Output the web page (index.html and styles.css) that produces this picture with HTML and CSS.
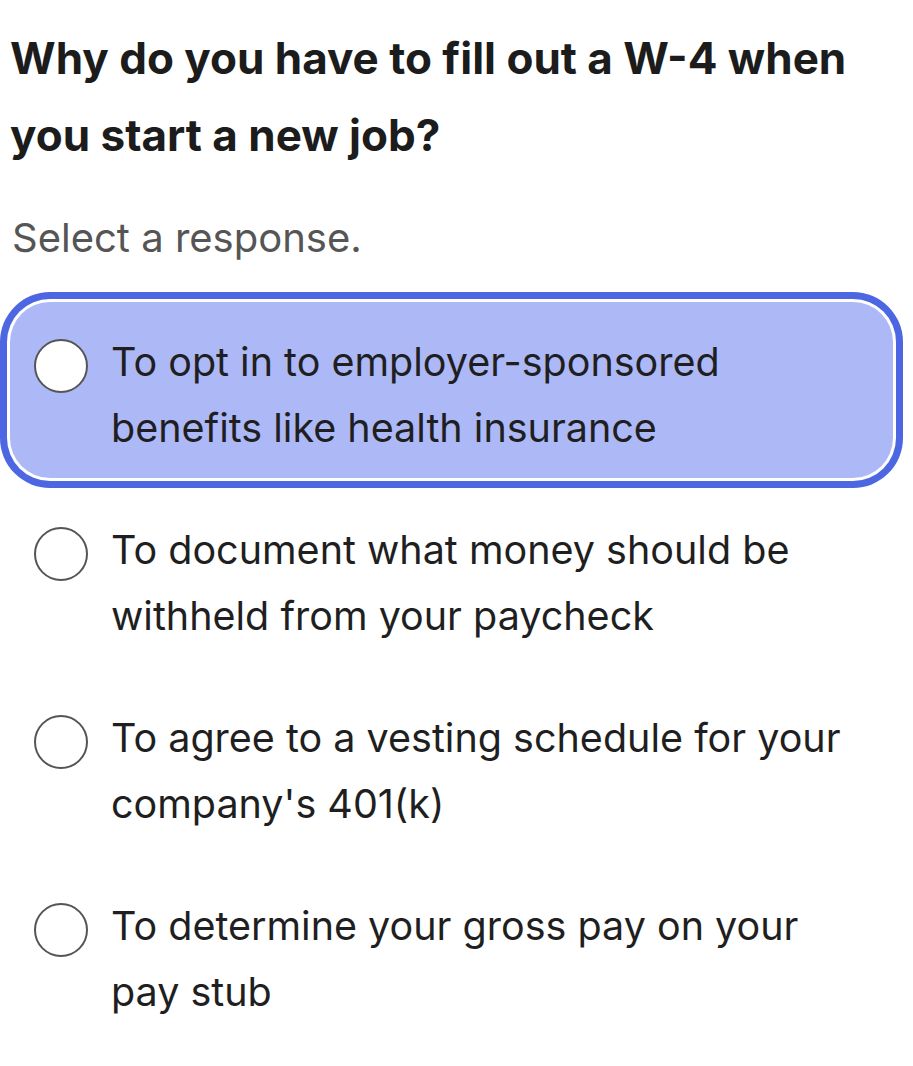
FILE: index.html
```html
<!DOCTYPE html>
<html lang="en">
<head>
<meta charset="utf-8">
<title>W-4 question</title>
<link rel="stylesheet" href="styles.css">
</head>
<body>
<main class="quiz">
  <h1 class="question">Why do you have to fill out a W-4 when you start a new job?</h1>
  <p class="prompt">Select a response.</p>
  <ul class="options">
    <li class="option is-selected">
      <span class="radio"></span>
      <span class="label">To opt in to employer-sponsored benefits like health insurance</span>
    </li>
    <li class="option">
      <span class="radio"></span>
      <span class="label">To document what money should be withheld from your paycheck</span>
    </li>
    <li class="option">
      <span class="radio"></span>
      <span class="label">To agree to a vesting schedule for your company's 401(k)</span>
    </li>
    <li class="option">
      <span class="radio"></span>
      <span class="label">To determine your gross pay on your pay stub</span>
    </li>
  </ul>
</main>
</body>
</html>
```

FILE: styles.css
```css
* { box-sizing: border-box; }

html, body {
  margin: 0;
  padding: 0;
  background: #ffffff;
}

body {
  font-family: "Inter", "Roboto", "Liberation Sans", sans-serif;
  color: #1d1d1f;
}

.quiz {
  padding: 20px 10px 0 10px;
}

.question {
  margin: 0;
  font-size: 44px;
  font-weight: 700;
  line-height: 77px;
  color: #1c1c1c;
}

.prompt {
  margin: 34px 0 0 2px;
  font-size: 40px;
  line-height: 60px;
  color: #555555;
  font-weight: 400;
}

.options {
  list-style: none;
  margin: 34px 0 0 0;
  padding: 0;
  display: flex;
  flex-direction: column;
  gap: 12px;
  width: 883px;
}

.option {
  display: flex;
  align-items: flex-start;
  gap: 23px;
  height: 176px;
  padding: 27px 20px 0 24px;
  border-radius: 40px;
}

.option.is-selected {
  background: #adb8f6;
  box-shadow: 0 0 0 3px #ffffff, 0 0 0 10px #4d67e2;
}

.radio {
  flex: none;
  width: 54px;
  height: 54px;
  margin-top: 10px;
  border-radius: 50%;
  border: 2.5px solid #555555;
  background: #ffffff;
}

.label {
  font-size: 39.5px;
  line-height: 66px;
  color: #1f1f22;
}
```
